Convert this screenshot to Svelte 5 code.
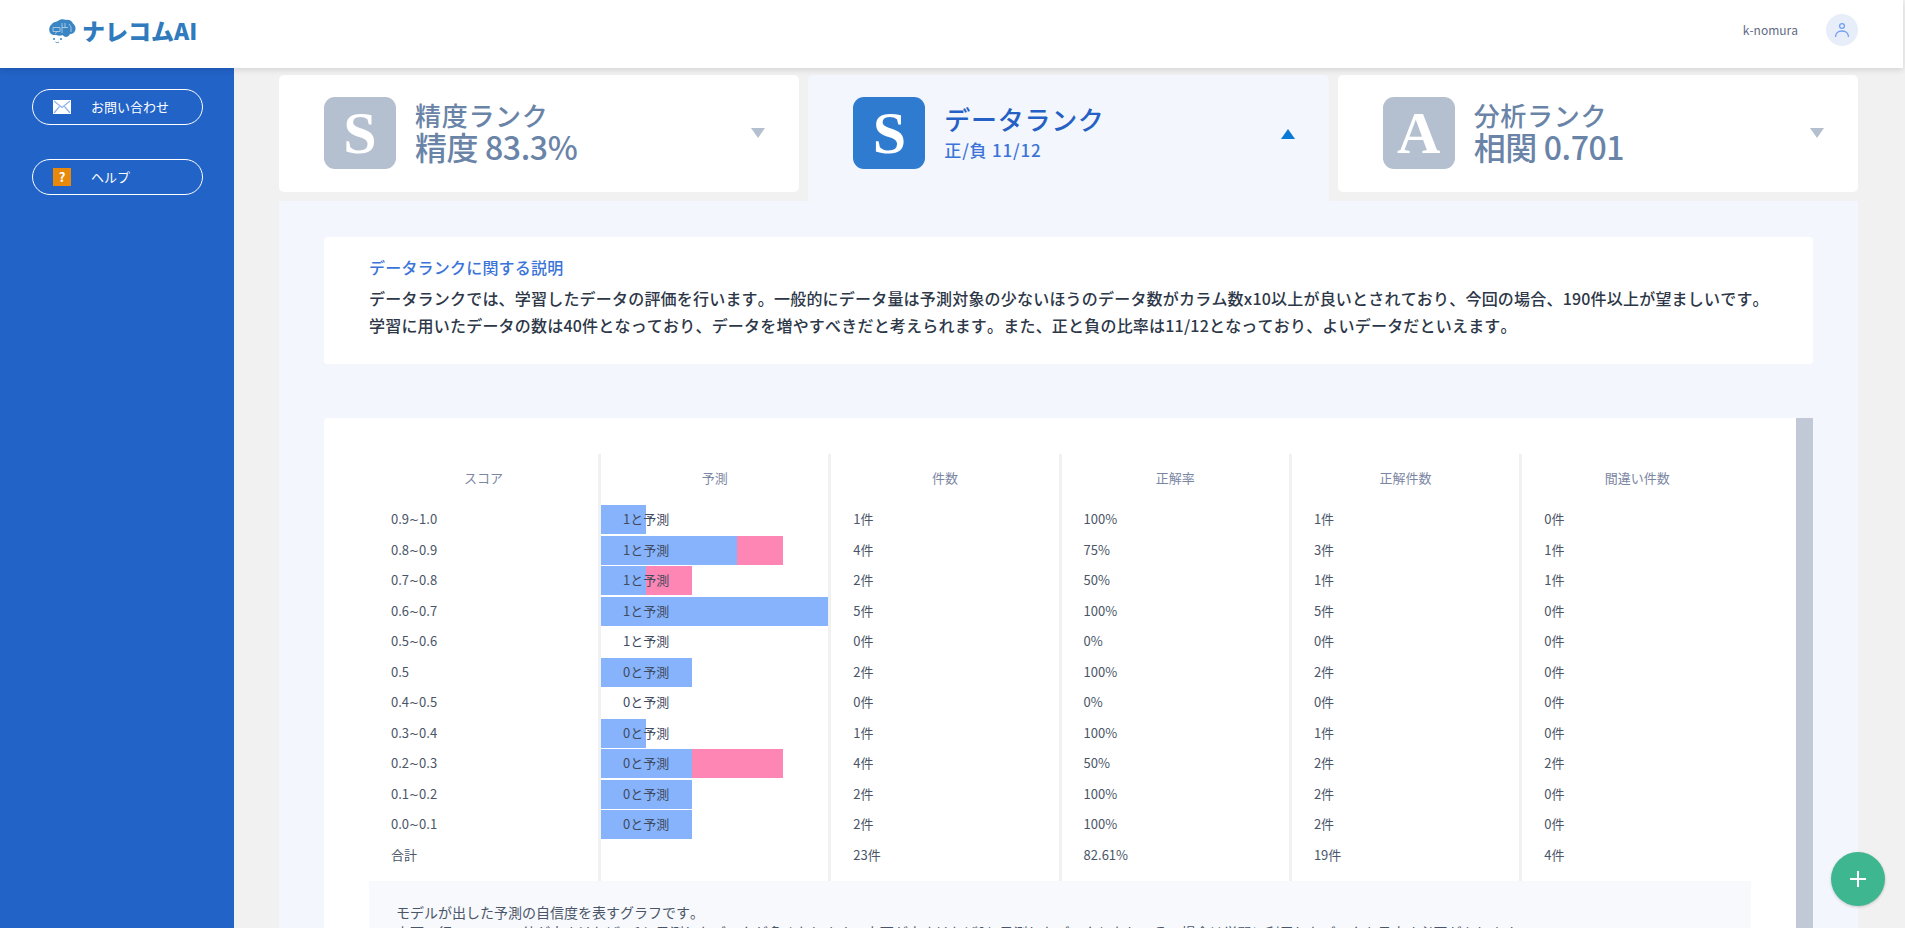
<script>
  const tabs = [
    { letter: 'S', title: '精度ランク', value: '精度 83.3%' },
    { letter: 'S', title: 'データランク', sub: '正/負 11/12', active: true },
    { letter: 'A', title: '分析ランク', value: '相関 0.701' }
  ];
  const unit = 45.4;
  const headers = ['スコア', '予測', '件数', '正解率', '正解件数', '間違い件数'];
  const rows = [
    ['0.9~1.0', '1と予測', 1, 0, '1件', '100%', '1件', '0件'],
    ['0.8~0.9', '1と予測', 3, 1, '4件', '75%', '3件', '1件'],
    ['0.7~0.8', '1と予測', 1, 1, '2件', '50%', '1件', '1件'],
    ['0.6~0.7', '1と予測', 5, 0, '5件', '100%', '5件', '0件'],
    ['0.5~0.6', '1と予測', 0, 0, '0件', '0%', '0件', '0件'],
    ['0.5', '0と予測', 2, 0, '2件', '100%', '2件', '0件'],
    ['0.4~0.5', '0と予測', 0, 0, '0件', '0%', '0件', '0件'],
    ['0.3~0.4', '0と予測', 1, 0, '1件', '100%', '1件', '0件'],
    ['0.2~0.3', '0と予測', 2, 2, '4件', '50%', '2件', '2件'],
    ['0.1~0.2', '0と予測', 2, 0, '2件', '100%', '2件', '0件'],
    ['0.0~0.1', '0と予測', 2, 0, '2件', '100%', '2件', '0件'],
    ['合計', '', 0, 0, '23件', '82.61%', '19件', '4件']
  ];
</script>

<div class="page">
  <header class="header">
    <div class="logo">
      <svg class="brain" width="27" height="25" viewBox="0 0 27 25">
        <path d="M2.500 5.500C4.500 2.500 8 3 9.500 1.500 12 -.2 15 0 17 1c3-.7 6 1 7 3.500 2.300 1.500 3.200 4.800 2 7.500-.8 2.200-3 3.200-5 3-.8 1.500-1.800 2.500-3 2.800-2 .4-3.500-.5-4.300-1.800-2 1-4.500 1-6.500 0C4.500 16.500 1.500 15.500.5 12.500-.2 10 .5 7 2.500 5.500z" fill="#3a86c4"/>
        <path d="M4 8.500h7v4H4zM13 4v10M13 8.500h6M16 4v4.500M20 5l2 3v5M6 15l2-2.500" fill="none" stroke="#fff" stroke-width=".8" opacity=".65"/>
        <circle cx="5" cy="20" r="1" fill="#3a86c4"/>
        <circle cx="12" cy="20" r="1" fill="#3a86c4"/>
        <path d="M6.500 23c1 .8 2.500.8 3.500 0" fill="none" stroke="#3a86c4" stroke-width=".9"/>
      </svg>
      <span class="logo-text">ナレコムAI</span>
    </div>
    <div class="user">
      <span class="user-name">k-nomura</span>
      <span class="avatar">
        <svg width="16" height="16" viewBox="0 0 16 16" fill="none" stroke="#6f9ef0" stroke-width="1.300">
          <circle cx="8" cy="4" r="2.400"/>
          <path d="M1.500 15c0-3.800 2.800-6 6.500-6s6.500 2.200 6.500 6"/>
        </svg>
      </span>
    </div>
  </header>

  <div class="body">
    <aside class="sidebar">
      <button class="side-btn">
        <svg width="18" height="14" viewBox="0 0 18 14">
          <rect width="18" height="14" fill="#fff"/>
          <path d="M1 1l8 6.500L17 1M1 13l5.500-6.500M17 13l-5.500-6.500" fill="none" stroke="#8fb4ea" stroke-width="1.200"/>
        </svg>
        <span class="btn-label">お問い合わせ</span>
      </button>
      <button class="side-btn">
        <i class="help">?</i>
        <span class="btn-label">ヘルプ</span>
      </button>
    </aside>

    <main class="main">
      <div class="tabs">
        {#each tabs as t}
          <div class="tab" class:active={t.active}>
            <div class="rank">{t.letter}</div>
            <div class="tab-text">
              <div class="tab-title">{t.title}</div>
              {#if t.value}<div class="tab-value">{t.value}</div>{/if}
              {#if t.sub}<div class="tab-sub">{t.sub}</div>{/if}
            </div>
            <div class="tri"></div>
          </div>
        {/each}
      </div>

      <section class="panel">
        <div class="desc">
          <h2>データランクに関する説明</h2>
          <p>データランクでは、学習したデータの評価を行います。一般的にデータ量は予測対象の少ないほうのデータ数がカラム数x10以上が良いとされており、今回の場合、190件以上が望ましいです。<br>学習に用いたデータの数は40件となっており、データを増やすべきだと考えられます。また、正と負の比率は11/12となっており、よいデータだといえます。</p>
        </div>

        <div class="table-card">
          <div class="table-wrap">
            <div class="row head">
              {#each headers as h}<div class="cell">{h}</div>{/each}
            </div>
            {#each rows as r}
              {@const range = r[0].split('~')}
              <div class="row">
                <div class="cell pad">{range[0]}{#if range[1]}<span class="tilde">~</span>{range[1]}{/if}</div>
                <div class="cell pred">
                  <div class="bars">
                    {#if r[2]}<div class="bar blue" style="width:{r[2] * unit}px"></div>{/if}
                    {#if r[3]}<div class="bar pink" style="width:{r[3] * unit}px"></div>{/if}
                  </div>
                  <div class="pred-label">{r[1]}</div>
                </div>
                <div class="cell pad">{r[4]}</div>
                <div class="cell pad">{r[5]}</div>
                <div class="cell pad">{r[6]}</div>
                <div class="cell pad">{r[7]}</div>
              </div>
            {/each}
            <div class="row tail">
              {#each headers as h}<div class="cell"></div>{/each}
            </div>
            <div class="note">
              モデルが出した予測の自信度を表すグラフです。<br>
              上下の行のスコアの値が大きければ、1と予測したデータが多くなります。上下が小さければ0と予測したデータとなり、その場合は学習に利用したデータを見直す必要があります。
            </div>
          </div>
          <div class="scrollbar"></div>
        </div>
      </section>
    </main>
  </div>

  <button class="fab" aria-label="追加">
    <svg width="16" height="16" viewBox="0 0 16 16"><path d="M8 0v16M0 8h16" stroke="#fff" stroke-width="2"/></svg>
  </button>
</div>

<style>
  :global(body) {
    background: #f1f1f1;
    overflow: hidden;
  }
  .page {
    position: relative;
    width: 1905px;
    height: 928px;
    overflow: hidden;
    font-family: "Noto Sans CJK JP", "Noto Sans", sans-serif;
    font-kerning: none;
    color: #4a5568;
    background: #f1f1f1;
  }
  .header {
    position: relative;
    z-index: 2;
    width: 1903px;
    height: 68px;
    box-sizing: border-box;
    background: #fff;
    box-shadow: 0 2px 6px rgba(0, 0, 0, 0.12);
    display: flex;
    align-items: center;
    justify-content: space-between;
    padding: 0 45px 0 49px;
  }
  .logo {
    display: flex;
    align-items: center;
    gap: 6px;
    margin-top: -6px;
  }
  .logo-text {
    font-size: 23px;
    font-weight: 900;
    color: #2f7bbd;
    line-height: 1;
    margin-top: -2px;
  }
  .user {
    display: flex;
    align-items: center;
    gap: 28px;
    margin-top: -8px;
  }
  .user-name {
    font-size: 12px;
    color: #5f6b84;
    margin-top: -2px;
  }
  .avatar {
    width: 32px;
    height: 32px;
    border-radius: 50%;
    background: #e8eef9;
    display: flex;
    align-items: center;
    justify-content: center;
  }
  .body {
    display: flex;
    height: 860px;
  }
  .sidebar {
    width: 234px;
    flex: none;
    box-sizing: border-box;
    background: #2263c7;
    padding: 21px 31px 0 32px;
    display: flex;
    flex-direction: column;
    gap: 34px;
  }
  .side-btn {
    height: 36px;
    box-sizing: border-box;
    border: 1px solid #fff;
    border-radius: 18px;
    background: none;
    color: #fff;
    font-family: inherit;
    font-kerning: none;
    font-size: 13px;
    font-weight: 400;
    display: flex;
    align-items: center;
    padding: 0 0 0 20px;
    gap: 20px;
  }
  .btn-label {
    margin-top: -2px;
  }
  .help {
    width: 18px;
    height: 18px;
    background: #e8890c;
    color: #fff;
    font-style: normal;
    font-weight: 700;
    font-size: 13px;
    line-height: 18px;
    text-align: center;
  }
  .main {
    flex: 1;
    padding: 7px 47px 0 45px;
    min-width: 0;
  }
  .tabs {
    display: grid;
    grid-template-columns: repeat(3, 1fr);
    gap: 9px;
    height: 126px;
  }
  .tab {
    height: 117px;
    box-sizing: border-box;
    background: #fff;
    border-radius: 5px;
    padding: 22px 34px 0 45px;
    display: flex;
    align-items: flex-start;
  }
  .tab.active {
    height: 126px;
    background: #f3f6fd;
    border-radius: 5px 5px 0 0;
  }
  .rank {
    width: 72px;
    height: 72px;
    flex: none;
    border-radius: 11px;
    background: #b4bfcf;
    color: #fff;
    font-family: "Liberation Serif", serif;
    font-size: 60px;
    font-weight: 700;
    line-height: 72px;
    text-align: center;
  }
  .active .rank {
    background: #2f7bd0;
  }
  .tab-text {
    flex: 1;
    margin-left: 19px;
    color: #6a84a8;
    margin-top: 2px;
  }
  .tab-title {
    font-size: 26px;
    line-height: 31px;
    font-weight: 500;
    letter-spacing: 0.7px;
  }
  .tab-value {
    font-size: 32px;
    line-height: 32px;
    font-weight: 500;
    letter-spacing: -0.4px;
  }
  .active .tab-text {
    margin-top: 6px;
  }
  .active .tab-title {
    color: #2560c4;
  }
  .tab-sub {
    font-size: 17px;
    line-height: 32px;
    color: #3b74d8;
    font-weight: 500;
    letter-spacing: 0.8px;
  }
  .tri {
    width: 0;
    height: 0;
    margin-top: 31px;
    border-left: 7px solid transparent;
    border-right: 7px solid transparent;
    border-top: 10px solid #b4bfcf;
  }
  .active .tri {
    border-top: 0;
    border-bottom: 10px solid #0a78d6;
    margin-top: 32px;
  }
  .panel {
    background: #f3f6fd;
    padding: 36px 45px 0;
    height: 800px;
  }
  .desc {
    background: #fff;
    border-radius: 4px;
    height: 127px;
    box-sizing: border-box;
    padding: 18px 45px 0;
    margin-bottom: 54px;
  }
  .desc h2 {
    margin: 0 0 6px;
    font-size: 16px;
    line-height: 24px;
    font-weight: 500;
    color: #3b74d8;
    letter-spacing: 0.2px;
  }
  .desc p {
    margin: 0;
    font-size: 16px;
    line-height: 27px;
    font-weight: 500;
    color: #2d3748;
    white-space: nowrap;
    letter-spacing: 0.2px;
  }
  .table-card {
    background: #fff;
    border-radius: 4px 0 0 4px;
    display: flex;
    height: 600px;
    overflow: hidden;
  }
  .table-wrap {
    flex: 1;
    min-width: 0;
    padding: 36px 45px 0;
  }
  .scrollbar {
    width: 17px;
    flex: none;
    background: #c1c9d6;
  }
  .row {
    display: grid;
    grid-template-columns: 232px repeat(5, 230.3px);
    height: 30.5px;
    font-size: 13px;
    line-height: 28px;
  }
  .row.head {
    height: 51px;
    color: #7b86a3;
    line-height: 48px;
    text-align: center;
  }
  .row.tail {
    height: 10px;
  }
  .cell {
    border-right: 3px solid #f1f1f1;
    min-width: 0;
  }
  .cell:last-child {
    border-right: 0;
  }
  .pad {
    padding-left: 22px;
  }
  .tilde {
    font-family: "DejaVu Sans", sans-serif;
    font-size: 12px;
  }
  .pred {
    display: grid;
  }
  .pred > * {
    grid-area: 1 / 1;
  }
  .bars {
    display: flex;
    height: 29px;
  }
  .bar.blue {
    background: #86b3fb;
  }
  .bar.pink {
    background: #fd86b4;
  }
  .pred-label {
    padding-left: 22px;
    color: #3f4a5f;
  }
  .note {
    background: #f7f9fc;
    width: 1382px;
    box-sizing: border-box;
    padding: 21px 27px;
    font-size: 14px;
    line-height: 20px;
    color: #4a5568;
  }
  .fab {
    position: absolute;
    left: 1831px;
    top: 852px;
    z-index: 3;
    width: 54px;
    height: 54px;
    padding: 0;
    border: 0;
    border-radius: 50%;
    background: #3eb68f;
    box-shadow: 0 1px 3px rgba(0, 0, 0, 0.2);
    display: flex;
    align-items: center;
    justify-content: center;
  }
</style>
